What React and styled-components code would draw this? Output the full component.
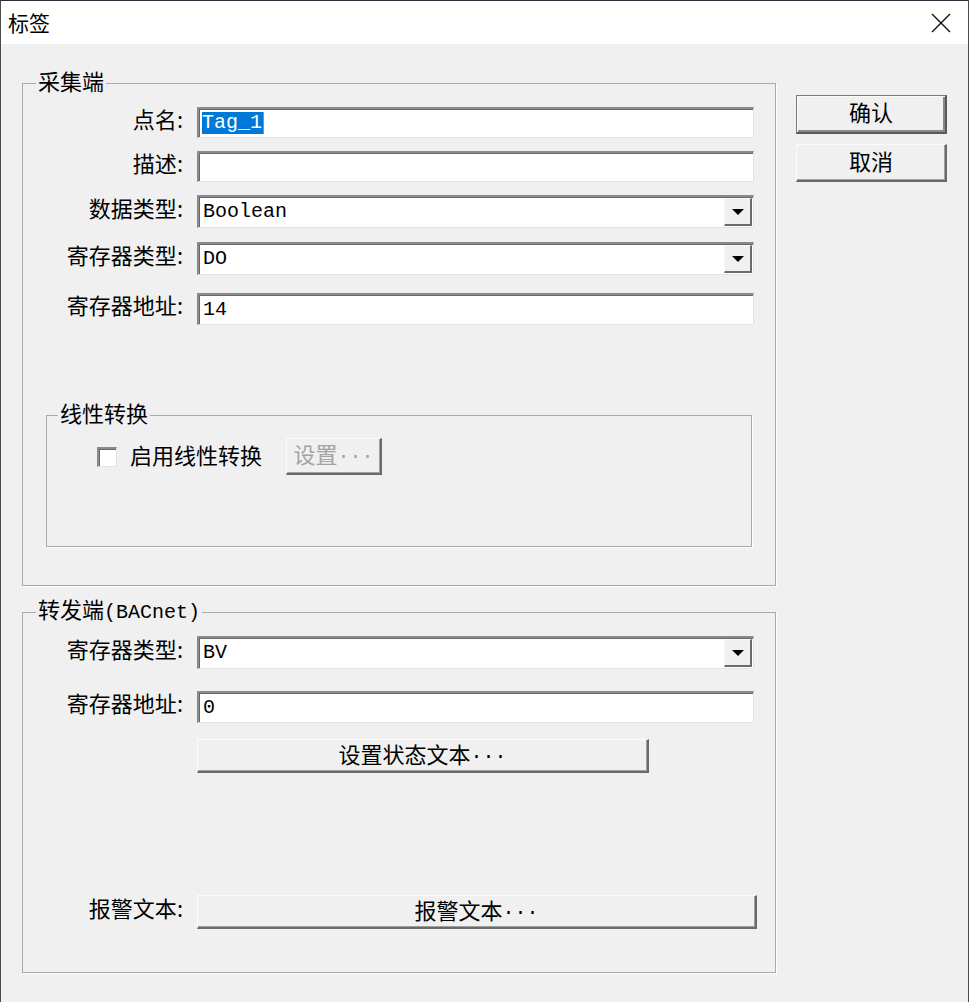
import React from 'react'
import styled, { createGlobalStyle, css } from 'styled-components'

const GlobalStyle = createGlobalStyle`
  html, body {
    margin: 0;
    padding: 0;
    background: #f0f0f0;
  }
  * {
    box-sizing: border-box;
  }
`

const CJK = `"Noto Sans CJK SC", "Noto Sans", sans-serif`
const MONO = `"Liberation Mono", "Noto Sans CJK SC", monospace`

const Window = styled.div`
  width: 969px;
  height: 1002px;
  background: #f0f0f0;
  border-top: 1px solid #2b2b3a;
  border-left: 1px solid #4a4a4a;
  border-right: 1px solid #4a4a4a;
  display: flex;
  flex-direction: column;
  font-family: ${CJK};
  color: #000;
  overflow: hidden;
`

const TitleBar = styled.div`
  height: 43px;
  flex: none;
  background: #fff;
  display: flex;
  align-items: center;
  justify-content: space-between;
  padding: 0 16px 0 7px;
`

const Title = styled.div`
  font-size: 21px;
  line-height: 24px;
  margin-top: -1px;
`

const CloseButton = styled.div`
  width: 22px;
  height: 22px;
  display: flex;
  align-items: center;
  justify-content: center;
`

const Body = styled.div`
  display: flex;
  align-items: flex-start;
  gap: 20px;
  padding: 24px 0 0 21px;
`

const LeftColumn = styled.div`
  width: 754px;
  display: flex;
  flex-direction: column;
`

const RightColumn = styled.div`
  display: flex;
  flex-direction: column;
  gap: 10px;
  margin-top: 27px;
`

const Group = styled.fieldset`
  margin: ${({ $mt }) => $mt || 0}px ${({ $mx }) => $mx || 0}px 0;
  padding: ${({ $pt }) => $pt}px 0 ${({ $pb }) => $pb}px 0;
  border: 1px solid #a9a9a9;
  box-shadow: 1px 1px 0 #fff;
  min-width: 0;
`

/* padding-bottom lifts the text above the border line, as in the original */
const Legend = styled.legend`
  font-size: 22px;
  line-height: 24px;
  padding: 0 2px 6px;
  margin-left: ${({ $ml }) => $ml}px;
  white-space: nowrap;
`

const Mono = styled.span`
  font-family: ${MONO};
  font-size: 20px;
  line-height: 1;
`

const Row = styled.div`
  display: grid;
  grid-template-columns: 160px 557px;
  column-gap: 14px;
  align-items: center;
  margin-top: ${({ $mt }) => $mt || 0}px;
`

const Label = styled.div`
  text-align: right;
  font-size: 22px;
  line-height: 24px;
  padding-bottom: 5px;
  margin-top: -5px;
  white-space: nowrap;
`

const sunken = css`
  background: #fff;
  border-style: solid;
  border-width: 2px 1px 1px 2px;
  border-color: #8a8a8a #e3e3e3 #e3e3e3 #8a8a8a;
  box-shadow: inset 1px 1px 0 #6a6a6a;
`

const TextBox = styled.div`
  ${sunken};
  height: ${({ $h }) => $h || 31}px;
  display: flex;
  align-items: center;
  padding-left: 4px;
  font-family: ${MONO};
  font-size: 20px;
  line-height: 22px;
`

const Selected = styled.span`
  background: #0078d7;
  color: #fff;
  border-right: 1px solid #e07a30;
  padding: 0 1px 0 0;
  margin-left: -1px;
`

const SelectBox = styled(TextBox)`
  height: 33px;
  justify-content: space-between;
  padding-right: 1px;
`

const DropButton = styled.div`
  width: 28px;
  height: 28px;
  background: #f0f0f0;
  border-style: solid;
  border-width: 1px 2px 2px 1px;
  border-color: #f8f8f8 #6a6a6a #6a6a6a #f8f8f8;
  display: flex;
  align-items: center;
  justify-content: center;
`

const Arrow = styled.div`
  width: 0;
  height: 0;
  border-left: 6px solid transparent;
  border-right: 6px solid transparent;
  border-top: 6px solid #000;
  margin-top: 1px;
`

const Button = styled.div`
  width: ${({ $w }) => $w}px;
  height: ${({ $h }) => $h || 34}px;
  background: #f0f0f0;
  border-style: solid;
  border-width: 1px 2px 2px 1px;
  border-color: #fbfbfb #6a6a6a #6a6a6a #fbfbfb;
  box-shadow: inset -1px -1px 0 #a0a0a0;
  display: flex;
  align-items: center;
  justify-content: center;
  padding-bottom: 6px;
  font-size: 22px;
  line-height: 24px;
  color: ${({ $disabled }) => ($disabled ? '#a3a3a3' : '#000')};
  white-space: nowrap;

  ${({ $primary }) =>
    $primary &&
    css`
      border-color: #7a7a7a #5a5a5a #5a5a5a #7a7a7a;
      box-shadow: inset 1px 1px 0 #fbfbfb, inset -2px -2px 0 #8a8a8a;
    `}
`

const CheckRow = styled.div`
  display: flex;
  align-items: center;
  padding-left: 50px;
`

const CheckBox = styled.div`
  ${sunken};
  width: 20px;
  height: 20px;
  margin-right: 13px;
`

const CheckLabel = styled.div`
  font-size: 22px;
  line-height: 24px;
  padding-bottom: 3px;
  margin-top: -3px;
  margin-right: 24px;
`

const Spacer = styled.div`
  width: 160px;
`

function Field({ label, mt, children }) {
  return (
    <Row $mt={mt}>
      <Label>{label}:</Label>
      {children}
    </Row>
  )
}

function Select({ value }) {
  return (
    <SelectBox>
      <span>{value}</span>
      <DropButton>
        <Arrow />
      </DropButton>
    </SelectBox>
  )
}

export default function App() {
  return (
    <>
      <GlobalStyle />
      <Window>
        <TitleBar>
          <Title>标签</Title>
          <CloseButton>
            <svg width="20" height="20" viewBox="0 0 20 20">
              <path d="M1 1 L19 19 M19 1 L1 19" stroke="#111" strokeWidth="1.4" fill="none" />
            </svg>
          </CloseButton>
        </TitleBar>
        <Body>
          <LeftColumn>
            <Group $pt={9} $pb={38}>
              <Legend $ml={13}>采集端</Legend>
              <Field label="点名">
                <TextBox $h={31}>
                  <Selected>Tag_1</Selected>
                </TextBox>
              </Field>
              <Field label="描述" mt={13}>
                <TextBox $h={31} />
              </Field>
              <Field label="数据类型" mt={13}>
                <Select value="Boolean" />
              </Field>
              <Field label="寄存器类型" mt={14}>
                <Select value="DO" />
              </Field>
              <Field label="寄存器地址" mt={18}>
                <TextBox $h={32}>14</TextBox>
              </Field>

              <Group $mt={75} $mx={23} $pt={8} $pb={71}>
                <Legend $ml={11}>线性转换</Legend>
                <CheckRow>
                  <CheckBox />
                  <CheckLabel>启用线性转换</CheckLabel>
                  <Button $w={96} $h={37} $disabled>
                    设置<Mono>...</Mono>
                  </Button>
                </CheckRow>
              </Group>
            </Group>

            <Group $mt={10} $pt={7} $pb={43}>
              <Legend $ml={13}>
                转发端<Mono>(BACnet)</Mono>
              </Legend>
              <Field label="寄存器类型">
                <Select value="BV" />
              </Field>
              <Field label="寄存器地址" mt={22}>
                <TextBox $h={32}>0</TextBox>
              </Field>
              <Row $mt={16}>
                <Spacer />
                <Button $w={452}>
                  设置状态文本<Mono>...</Mono>
                </Button>
              </Row>
              <Field label="报警文本" mt={122}>
                <Button $w={560}>
                  报警文本<Mono>...</Mono>
                </Button>
              </Field>
            </Group>
          </LeftColumn>

          <RightColumn>
            <Button $w={151} $h={39} $primary>
              确认
            </Button>
            <Button $w={151} $h={38}>
              取消
            </Button>
          </RightColumn>
        </Body>
      </Window>
    </>
  )
}
